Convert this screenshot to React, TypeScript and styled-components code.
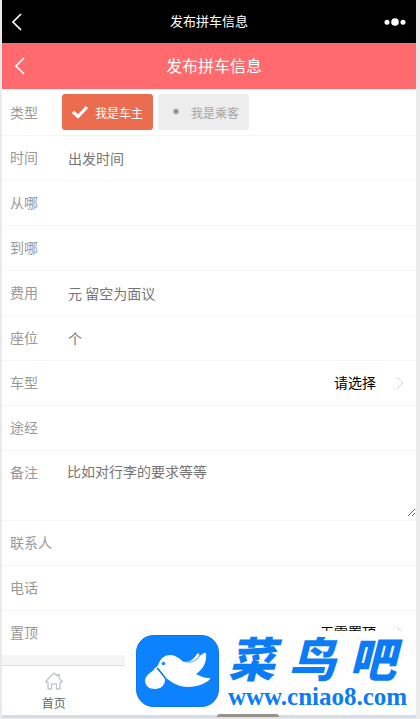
import React from "react";
import styled, { createGlobalStyle, css } from "styled-components";

const GlobalStyle = createGlobalStyle`
  *, *::before, *::after { box-sizing: border-box; }
  body {
    margin: 0;
    background: #eaeaea;
    font-family: "Noto Sans CJK SC", sans-serif;
    font-size: 14px;
  }
  button, input, select, textarea { font: inherit; }
`;

const Screen = styled.div`
  position: relative;
  display: flex;
  flex-direction: column;
  min-height: calc(100vh - 1px);
  margin: 0 4px 0 2px;
  background: #f5f5f5;
  border-bottom: 3px solid #d5dce6;
`;

const Bar = styled.header<{ $tone: "system" | "page" }>`
  display: grid;
  align-items: center;
  color: #fff;
  ${({ $tone }) =>
    $tone === "system"
      ? css`
          grid-template-columns: 40px 1fr 40px;
          height: 43px;
          background: #000;
          font-size: 13px;
        `
      : css`
          grid-template-columns: 40px 1fr 30px;
          height: 46px;
          background: #ff6a6f;
          font-size: 16px;
        `}
`;

const BarTitle = styled.h1`
  margin: 0;
  padding-bottom: 2px;
  font-size: inherit;
  font-weight: 400;
  line-height: 24px;
  text-align: center;
`;

const IconButton = styled.button<{ $inset?: number }>`
  display: flex;
  align-items: center;
  height: 100%;
  padding: 0 0 0 ${({ $inset = 0 }) => $inset}px;
  border: 0;
  background: none;
  color: inherit;
`;

const Form = styled.form`
  background: #fff;
`;

const Row = styled.div<{ $size?: "choice" | "tall" }>`
  display: flex;
  align-items: ${({ $size }) => ($size === "tall" ? "flex-start" : "center")};
  height: ${({ $size }) => ($size === "choice" ? 47 : $size === "tall" ? 70 : 45)}px;
  padding-left: 8px;
  border-bottom: 1px solid #f5f5f5;
`;

const Label = styled.label`
  flex: 0 0 52px;
  color: #999;
  line-height: 42px;
`;

const RowLabel = styled(Label)`
  padding-bottom: 2px;
`;

const TextInput = styled.input`
  flex: 1;
  min-width: 0;
  height: 44px;
  padding: 0 6px;
  border: 0;
  outline: 0;
  background: transparent;
  color: #333;
  &::placeholder {
    color: #757575;
    opacity: 1;
  }
`;

const TextArea = styled.textarea`
  flex: 1;
  min-width: 0;
  height: 66px;
  padding: 10px 5px;
  border: 0;
  outline: 0;
  background: transparent;
  line-height: 20px;
  resize: vertical;
  &::placeholder {
    color: #757575;
    opacity: 1;
  }
`;

const SelectWrap = styled.div`
  display: flex;
  flex: 1;
  align-items: center;
  gap: 20px;
  padding-right: 12px;
`;

const Select = styled.select`
  flex: 1;
  height: 44px;
  padding: 0 0 2px;
  border: 0;
  outline: 0;
  appearance: none;
  background: transparent;
  color: #000;
  text-align-last: right;
`;

const Choices = styled.div`
  display: flex;
  gap: 5px;
`;

const Choice = styled.label<{ $active: boolean }>`
  display: flex;
  align-items: center;
  gap: 6px;
  width: 91px;
  height: 36px;
  padding-left: 9px;
  border-radius: 3px;
  background: ${({ $active }) => ($active ? "#ec6c50" : "#ededed")};
  color: ${({ $active }) => ($active ? "#fff" : "#a3a3a3")};
  font-size: 12px;
  white-space: nowrap;
`;

const HiddenRadio = styled.input`
  position: absolute;
  opacity: 0;
  pointer-events: none;
`;

const TabBar = styled.nav`
  display: flex;
  height: 50px;
  margin-top: auto;
  border-top: 1px solid #dedede;
  background: #fff;
`;

const Tab = styled.a`
  display: flex;
  flex-direction: column;
  align-items: center;
  width: 25%;
  padding-top: 6px;
  color: #666;
  font-size: 12px;
  line-height: 18px;
  gap: 4px;
  text-decoration: none;
`;

const Watermark = styled.aside`
  position: absolute;
  right: 0;
  bottom: 0;
  left: 123px;
  display: flex;
  align-items: center;
  gap: 8px;
  height: 84px;
  padding: 0 0 4px 10px;
  background: #fff;
  color: #0b7cf5;
  &::after {
    content: "";
    position: absolute;
    bottom: -2px;
    left: 92px;
    width: 62px;
    height: 3px;
    border-radius: 3px 3px 0 0;
    background: #98928d;
  }
`;

const BrandText = styled.div`
  display: flex;
  flex-direction: column;
`;

const BrandName = styled.strong`
  display: flex;
  justify-content: space-between;
  width: 168px;
  font-size: 47px;
  font-style: italic;
  font-weight: 900;
  line-height: 52px;
`;

const BrandUrl = styled.span`
  font-family: "Liberation Serif", serif;
  font-size: 25px;
  font-weight: 700;
  line-height: 28px;
`;

function Back() {
  return (
    <svg width="12" height="18" viewBox="0 0 12 18" fill="none" stroke="currentColor" strokeWidth="1.7" aria-hidden="true">
      <path d="M10 1 2 9l8 8" />
    </svg>
  );
}

function Arrow() {
  return (
    <svg width="8" height="14" viewBox="0 0 8 14" fill="none" stroke="#cfd3d8" aria-hidden="true">
      <path d="m1 1 6 6-6 6" />
    </svg>
  );
}

function Check() {
  return (
    <svg width="18" height="14" viewBox="0 0 18 14" fill="none" stroke="#fff" strokeWidth="3.2" aria-hidden="true">
      <path d="m2 7 5 4.5L16 2" />
    </svg>
  );
}

function Dot() {
  return (
    <svg width="18" height="14" viewBox="0 0 18 14" aria-hidden="true">
      <circle cx="9" cy="6.5" r="2.8" fill="#a9a09c" />
      <circle cx="9" cy="6.5" r="1" fill="#82716b" />
    </svg>
  );
}

function More() {
  return (
    <svg width="22" height="8" viewBox="0 0 22 8" fill="#fff" aria-hidden="true">
      <circle cx="3" cy="4.3" r="2.5" />
      <circle cx="11" cy="4" r="3.8" />
      <circle cx="19" cy="4.3" r="2.5" />
    </svg>
  );
}

function Home() {
  return (
    <svg width="18" height="18" viewBox="0 0 18 18" fill="none" stroke="#bcc4d0" strokeWidth="1.3" strokeLinejoin="round" aria-hidden="true">
      <path d="M1 9.2 9 1l3.4 3.4V2.6h2v3.8L17 9.2v1h-2V17h-3.6v-5.2H6.6V17H3v-6.8H1z" />
    </svg>
  );
}

function Dove() {
  return (
    <svg width="85" height="72" viewBox="0 0 85 72" role="img" aria-label="菜鸟吧">
      <rect x="1.5" y="0.5" width="82" height="71" rx="17" fill="#0d82ff" stroke="#0873ed" />
      <path fill="#fff" d="M19 34c2-2 4-3 5-6 2-5 6-8 11-8 4 0 7 2 10 4 2 2 3 3 6 3 5 0 8-4 11-8 2-2 3 0 1 3 2-1 4-3 6-4 3-1 2 3 2 6-1 6-4 11-10 15 4 2 8 4 13 4 2 0 1 2-1 3-9 6-18 7-28 5-6-2-10-5-14-8-3-4-5-7-8-10-2 1-3 2-4 1z" />
      <path fill="#fff" d="M20 33c-2 4-9 6-10 12 0 6 4 9 10 9s10-4 10-9c-1-6-6-8-8-12z" />
      <path d="M51 27c6 1 12-2 14-7" fill="none" stroke="#7db8fb" strokeWidth="1.3" />
      <path d="M22 33c3 3 5 6 8 10" fill="none" stroke="#0873ed" strokeWidth="1.3" />
      <circle cx="28.5" cy="28.5" r="1.8" fill="#2388f8" />
    </svg>
  );
}

function TextRow({ id, label, placeholder, type = "text" }: { id: string; label: string; placeholder?: string; type?: string }) {
  return (
    <Row>
      <RowLabel htmlFor={id}>{label}</RowLabel>
      <TextInput id={id} type={type} placeholder={placeholder} />
    </Row>
  );
}

function SelectRow({ id, label, value }: { id: string; label: string; value: string }) {
  return (
    <Row>
      <RowLabel htmlFor={id}>{label}</RowLabel>
      <SelectWrap>
        <Select id={id}>
          <option>{value}</option>
        </Select>
        <Arrow />
      </SelectWrap>
    </Row>
  );
}

export default function App() {
  const [role, setRole] = React.useState("driver");
  const roles = [
    { value: "driver", text: "我是车主" },
    { value: "rider", text: "我是乘客" },
  ];
  return (
    <>
      <GlobalStyle />
      <Screen>
        <Bar $tone="system">
          <IconButton type="button" aria-label="返回" $inset={9}><Back /></IconButton>
          <BarTitle as="div">发布拼车信息</BarTitle>
          <IconButton type="button" aria-label="更多" $inset={8}><More /></IconButton>
        </Bar>
        <Bar $tone="page">
          <IconButton type="button" aria-label="返回" $inset={12}><Back /></IconButton>
          <BarTitle>发布拼车信息</BarTitle>
        </Bar>
        <Form>
          <Row $size="choice">
            <Label as="span" id="role-label">类型</Label>
            <Choices role="radiogroup" aria-labelledby="role-label">
              {roles.map(({ value, text }) => (
                <Choice key={value} $active={role === value}>
                  <HiddenRadio type="radio" name="role" checked={role === value} onChange={() => setRole(value)} />
                  {role === value ? <Check /> : <Dot />}
                  {text}
                </Choice>
              ))}
            </Choices>
          </Row>
          <TextRow id="time" label="时间" placeholder="出发时间" />
          <TextRow id="from" label="从哪" />
          <TextRow id="to" label="到哪" />
          <TextRow id="price" label="费用" placeholder="元 留空为面议" />
          <TextRow id="seats" label="座位" placeholder="个" />
          <SelectRow id="car" label="车型" value="请选择" />
          <TextRow id="via" label="途经" />
          <Row $size="tall">
            <RowLabel htmlFor="note">备注</RowLabel>
            <TextArea id="note" placeholder="比如对行李的要求等等" />
          </Row>
          <TextRow id="contact" label="联系人" />
          <TextRow id="phone" label="电话" type="tel" />
          <SelectRow id="top" label="置顶" value="无需置顶" />
        </Form>
        <TabBar>
          <Tab href="#home">
            <Home />
            首页
          </Tab>
        </TabBar>
        <Watermark>
          <Dove />
          <BrandText>
            <BrandName>
              <span>菜</span>
              <span>鸟</span>
              <span>吧</span>
            </BrandName>
            <BrandUrl>www.cniao8.com</BrandUrl>
          </BrandText>
        </Watermark>
      </Screen>
    </>
  );
}
